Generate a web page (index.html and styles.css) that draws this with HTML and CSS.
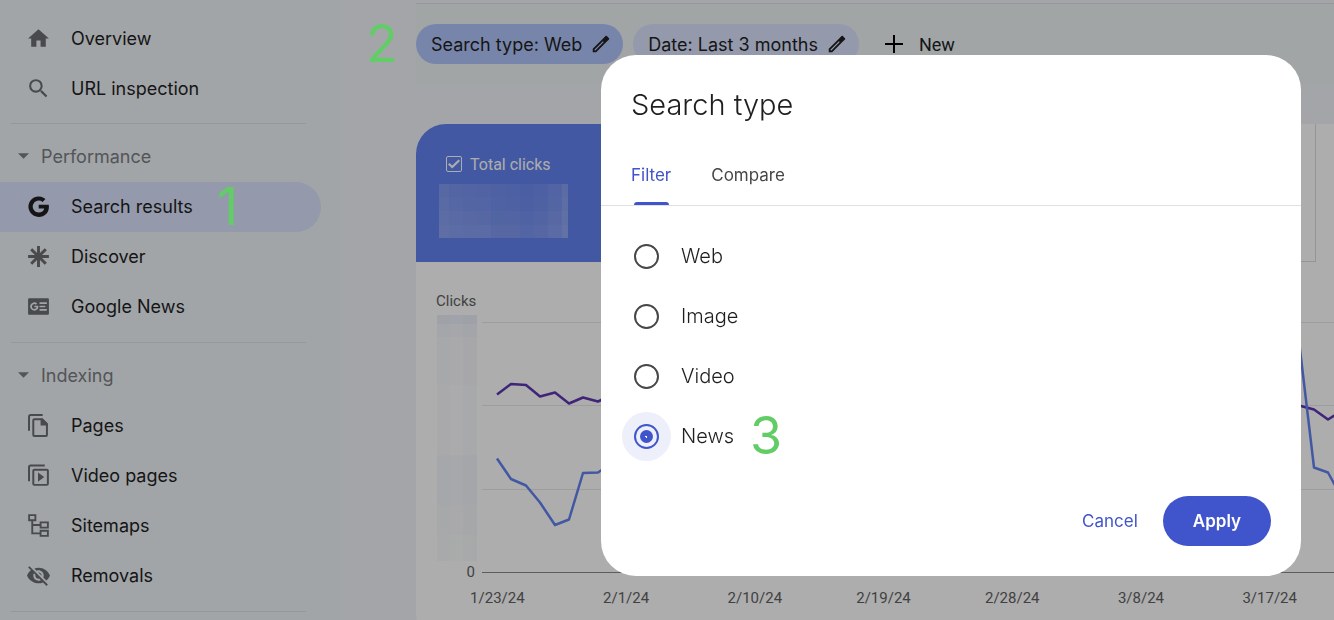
FILE: index.html
```html
<!DOCTYPE html>
<html lang="en">
<head>
<meta charset="utf-8">
<title>Search Console - Performance</title>
<link rel="stylesheet" href="styles.css">
</head>
<body>
<div class="app">
  <nav class="sidebar">
    <a class="nav-item" href="#"><svg class="icon" viewBox="0 0 24 24"><path d="M10 20v-6h4v6h5v-8h3L12 3 2 12h3v8z"/></svg>Overview</a>
    <a class="nav-item" href="#"><svg class="icon" viewBox="0 0 24 24"><path d="M15.5 14h-.79l-.28-.27A6.47 6.47 0 0 0 16 9.5 6.5 6.5 0 1 0 9.5 16c1.61 0 3.09-.59 4.23-1.57l.27.28v.79l5 4.99L20.49 19l-4.99-5zm-6 0C7.01 14 5 11.99 5 9.5S7.01 5 9.5 5 14 7.01 14 9.5 11.99 14 9.5 14z"/></svg>URL inspection</a>
    <hr class="divider">
    <button class="nav-heading" type="button"><svg class="caret" viewBox="0 0 12 6"><path d="M0 0h12L6 6z"/></svg>Performance</button>
    <a class="nav-item active" href="#"><svg class="icon" viewBox="0 0 24 24"><path d="M12.2 10.2v3.7h5.3c-.5 2.3-2.5 3.8-5.3 3.8a5.7 5.7 0 1 1 3.7-10l2.8-2.8A9.8 9.8 0 1 0 12.2 22c5.8 0 9.8-4 9.8-9.8 0-.7-.1-1.400-.2-2z"/></svg>Search results</a>
    <a class="nav-item" href="#"><svg class="icon" viewBox="0 0 24 24"><path fill="none" stroke="currentColor" stroke-width="2.8" d="M12 2v20M2 12h20M5 5l14 14M19 5L5 19"/></svg>Discover</a>
    <a class="nav-item" href="#"><svg class="icon" viewBox="0 0 24 24"><path fill-rule="evenodd" d="M3 4h18a1 1 0 0 1 1 1v14a1 1 0 0 1-1 1H3a1 1 0 0 1-1-1V5a1 1 0 0 1 1-1zm10 4v1.600h7V8zm0 3.200v1.600h5.500v-1.600zm0 3.200V16h7v-1.600zM8 11.200v1.600h2.100c-.2.900-1 1.500-2.100 1.500a2.300 2.300 0 1 1 1.500-4l1.200-1.200A4 4 0 1 0 8 16c2.300 0 3.900-1.600 3.900-4 0-.3 0-.5-.1-.8z"/></svg>Google News</a>
    <hr class="divider">
    <button class="nav-heading" type="button"><svg class="caret" viewBox="0 0 12 6"><path d="M0 0h12L6 6z"/></svg>Indexing</button>
    <a class="nav-item" href="#"><svg class="icon" viewBox="0 0 24 24"><path fill="none" stroke="currentColor" stroke-width="1.900" d="M2.900 17V3.500Q2.900 1.900 4.500 1.900H16M8 5.900h7.500L20.100 10.500V21a1 1 0 0 1-1 1H8a1 1 0 0 1-1-1V6.900a1 1 0 0 1 1-1z"/><path d="M14 5.500h2l4.800 5V12H14z"/></svg>Pages</a>
    <a class="nav-item" href="#"><svg class="icon" viewBox="0 0 24 24"><path fill="none" stroke="currentColor" stroke-width="1.900" d="M2.900 17.500V4Q2.900 2.400 4.500 2.400H18M8 6.400h12a1 1 0 0 1 1 1v12.600a1 1 0 0 1-1 1H8a1 1 0 0 1-1-1V7.400a1 1 0 0 1 1-1z"/><path d="M11.500 9v9l6-4.500z"/></svg>Video pages</a>
    <a class="nav-item" href="#"><svg class="icon" viewBox="0 0 24 24"><path fill="none" stroke="currentColor" stroke-width="1.800" d="M3 2h6v5H3zM14 9h7v5h-7zM14 17h7v5h-7zM6 7v12.500h8M6 11.500h8"/></svg>Sitemaps</a>
    <a class="nav-item" href="#"><svg class="icon" viewBox="0 0 24 24"><path d="M12 7c2.760 0 5 2.240 5 5 0 .65-.13 1.260-.36 1.830l2.920 2.920c1.510-1.260 2.700-2.890 3.430-4.750-1.730-4.390-6-7.500-11-7.500-1.400 0-2.740.25-3.980.7l2.160 2.160C10.740 7.130 11.350 7 12 7zM2 4.270l2.280 2.280.46.46C3.080 8.300 1.780 10.020 1 12c1.730 4.390 6 7.500 11 7.500 1.550 0 3.030-.3 4.380-.84l.42.42L19.730 22 21 20.730 3.270 3 2 4.270zM7.530 9.800l1.550 1.550c-.05.21-.08.43-.08.65 0 1.660 1.340 3 3 3 .22 0 .44-.03.65-.08l1.550 1.550c-.67.33-1.410.53-2.200.53-2.760 0-5-2.240-5-5 0-.79.2-1.530.53-2.200zm4.310-.78l3.150 3.150.02-.16c0-1.660-1.340-3-3-3l-.17.010z"/></svg>Removals</a>
    <hr class="divider">
  </nav>

  <main class="main">
    <div class="filter-bar">
      <button class="chip selected" type="button">Search type: Web<svg class="icon" viewBox="0 0 24 24"><path d="M3 17.250V21h3.750L17.810 9.940l-3.750-3.750zM5.920 19H5v-.92l9.060-9.060.92.920zM20.710 5.630l-2.340-2.340a1 1 0 0 0-1.410 0l-2.900 2.900 3.750 3.750 2.900-2.900a1 1 0 0 0 0-1.410z"/></svg></button>
      <button class="chip" type="button">Date: Last 3 months<svg class="icon" viewBox="0 0 24 24"><path d="M3 17.250V21h3.750L17.810 9.940l-3.750-3.750zM5.920 19H5v-.92l9.060-9.060.92.920zM20.710 5.630l-2.340-2.340a1 1 0 0 0-1.410 0l-2.900 2.900 3.750 3.750 2.900-2.900a1 1 0 0 0 0-1.410z"/></svg></button>
      <button class="add-filter" type="button"><svg class="plus" viewBox="0 0 18 18"><path d="M8 0h2v8h8v2h-8v8H8v-8H0V8h8z"/></svg>New</button>
    </div>

    <section class="card">
      <div class="metrics">
        <div class="metric clicks">
          <label class="metric-label"><input class="check" type="checkbox" checked>Total clicks</label>
          <svg class="mosaic" viewBox="0 0 129 54" fill="#fff">
            <path opacity=".16" d="M0 0h10v54H0z"/><path opacity=".12" d="M10 0h14v54H10z"/><path opacity=".11" d="M24 0h14v54H24z"/><path opacity=".1" d="M38 0h14v54H38z"/><path opacity=".06" d="M52 0h14v54H52z"/><path opacity=".05" d="M66 0h15v54H66z"/><path opacity=".03" d="M81 0h14v54H81z"/><path opacity=".05" d="M95 0h14v54H95z"/><path opacity=".11" d="M109 0h14v54h-14z"/><path opacity=".2" d="M123 0h6v54h-6z"/>
            <path opacity=".05" d="M0 0h129v13H0z"/><path opacity=".07" d="M0 13h129v14H0z"/><path opacity=".1" d="M0 27h129v14H0z"/><path opacity=".14" d="M0 41h129v13H0z"/>
          </svg>
        </div>
        <div class="metric rest"></div>
      </div>
      <div class="chart">
        <div class="axis-title">Clicks</div>
        <div class="plot-row">
          <div class="y-axis"><div class="y-mosaic"></div><span>0</span></div>
          <svg class="plot" viewBox="0 0 852 258" preserveAspectRatio="none">
            <path class="grid" d="M0 7.500h852M0 90.500h852M0 174.500h852"/>
            <path class="base" d="M0 257.500h852"/>
            <path class="line impressions" d="M15 79.500L29 69L44 70L58 81.500L73 77.500L87 88.500L101 82.500L116 86.500L130 80L400 85L817 90.500L832 94.500L846 104.500L861 95"/>
            <path class="line total" d="M15 143.500L29 164L44 170.500L58 187.500L73 210L87 204.500L101 158L116 157.500L130 148L400 120L803 20L817 26L832 152.500L846 157.500L861 185"/>
          </svg>
        </div>
        <div class="dates"><span>1/23/24</span><span>2/1/24</span><span>2/10/24</span><span>2/19/24</span><span>2/28/24</span><span>3/8/24</span><span>3/17/24</span></div>
      </div>
    </section>
  </main>
</div>

<div class="backdrop">
  <span class="step step-one">1</span>
  <span class="step step-two">2</span>
  <form class="dialog" role="dialog" aria-labelledby="dialog-title">
    <h1 class="dialog-title" id="dialog-title">Search type</h1>
    <div class="tabs" role="tablist">
      <button class="tab current" type="button" role="tab" aria-selected="true">Filter</button>
      <button class="tab" type="button" role="tab" aria-selected="false">Compare</button>
    </div>
    <div class="options">
      <label class="option"><input class="radio" type="radio" name="type">Web</label>
      <label class="option"><input class="radio" type="radio" name="type">Image</label>
      <label class="option"><input class="radio" type="radio" name="type">Video</label>
      <div class="option-row"><label class="option"><input class="radio" type="radio" name="type" checked>News</label><span class="step">3</span></div>
    </div>
    <div class="actions">
      <button class="cancel" type="button">Cancel</button>
      <button class="apply" type="button">Apply</button>
    </div>
  </form>
</div>
</body>
</html>
```
FILE: styles.css
```css
* { box-sizing: border-box; }

body {
  margin: 0;
  height: 100vh;
  overflow: hidden;
  background: #f2f3f9;
  color: #1f1f1f;
  font-family: Inter, Roboto, sans-serif;
  font-size: 18px;
}

button {
  border: 0;
  padding: 0;
  background: none;
  color: inherit;
  font: inherit;
  cursor: pointer;
}

.app { display: flex; height: 100vh; overflow: hidden; }

.sidebar {
  flex: none;
  width: 340px;
  height: 100vh;
  overflow: hidden;
  padding-top: 13px;
  background: #eef3f7;
}

.nav-item {
  display: flex;
  align-items: center;
  gap: 20px;
  height: 50px;
  margin-right: 19px;
  padding-left: 26px;
  border-radius: 0 25px 25px 0;
  color: #1f1f1f;
  text-decoration: none;
}

.nav-heading ~ .nav-item { padding-bottom: 2px; }

.icon { flex: none; width: 25px; height: 25px; fill: currentColor; }
.nav-item .icon { color: #6a6d70; }
.nav-item.active { background: #dae2fd; }
.nav-item.active .icon { color: #1f1f1f; }

.divider {
  height: 1px;
  margin: 10px 34px 8px 11px;
  border: 0;
  background: #dcdfe3;
}

.nav-heading {
  display: flex;
  align-items: center;
  gap: 12px;
  width: 100%;
  height: 50px;
  padding: 0 0 2px 18px;
  color: #7b7e82;
}

.caret { width: 11px; height: 6px; fill: currentColor; }

.main { flex: 1; min-width: 0; padding: 3px 0 0 76px; }

.filter-bar {
  display: flex;
  gap: 10px;
  height: 81px;
  padding-top: 20px;
  border-top: 1px solid #dcdfe2;
  background: #eef3f5;
  white-space: nowrap;
}

.chip {
  display: flex;
  align-items: center;
  gap: 8px;
  height: 40px;
  padding: 0 11px 0 15px;
  border-radius: 20px;
  background: #dae2fd;
}

.chip.selected { background: #b1c5fb; }
.chip .icon { width: 22px; height: 22px; }

.add-filter {
  display: flex;
  align-items: center;
  gap: 16px;
  height: 40px;
  margin-left: 16px;
  font-family: Roboto, sans-serif;
}

.plus { width: 18px; height: 18px; }

.card {
  height: 520px;
  margin-top: 40px;
  border-radius: 30px 0 0 30px;
  overflow: hidden;
  background: #fff;
  font-family: Roboto, sans-serif;
}

.metrics { display: flex; height: 138px; margin-right: 18px; }
.metric { flex: 1; }
.rest { flex: 3; border: solid #dadce0; border-width: 0 1px 1px 0; }
.clicks { padding: 30px 23px; background: #6282f0; color: #fff; font-size: 16px; }
.metric-label { display: flex; align-items: center; gap: 8px; height: 20px; padding-left: 7px; }

.check {
  appearance: none;
  display: grid;
  place-items: center;
  width: 16px;
  height: 16px;
  margin: 0;
  border: 1px solid #fff;
  border-radius: 2px;
}

.check::before {
  content: "";
  width: 12px;
  height: 10px;
  background: #fff;
  clip-path: polygon(0 55%, 12% 40%, 35% 65%, 88% 5%, 100% 20%, 35% 95%);
}

.mosaic { display: block; width: 129px; height: 54px; margin-top: 10px; }

.chart { color: #616161; font-size: 15px; }
.axis-title { height: 53px; padding: 29px 0 0 20px; line-height: 20px; }
.plot-row { display: flex; height: 258px; }
.y-axis { position: relative; flex: none; width: 66px; padding-left: 21px; }
.y-axis span { position: absolute; right: 7px; bottom: -8px; line-height: 18px; }

.y-mosaic {
  width: 40px;
  height: 246px;
  background:
    linear-gradient(90deg, #9fb4e00a 13px, #9fb4e004 13px 26px, #9fb4e00e 26px),
    linear-gradient(#eff1fb 9px, #f6f7fc 9px 22px, #fbfbfd 22px 70px, #fdfdfd 70px 140px, #f8f9fc 140px 190px, #fafbfc 190px 220px, #fcfdfc 220px);
}

.plot { flex: 1; min-width: 0; height: 258px; }
.plot path { fill: none; vector-effect: non-scaling-stroke; }
.plot .grid { stroke: #e8e8e8; }
.plot .base { stroke: #8a8a8a; }
.plot .line { stroke-width: 2.500px; stroke-linejoin: round; }
.plot .impressions { stroke: #5e35b1; }
.plot .total { stroke: #6282f0; }

.dates { display: flex; padding: 15px 0 0 17px; line-height: 20px; }
.dates span { flex: 1; text-align: center; }

.backdrop {
  position: fixed;
  inset: 0;
  display: flex;
  justify-content: flex-end;
  align-items: flex-start;
  padding: 55px 33px;
  background: rgba(0, 0, 0, 0.32);
}

.dialog {
  width: 700px;
  max-width: 100%;
  border-radius: 35px;
  overflow: hidden;
  background: #fff;
  font-size: 17px;
}

.dialog-title {
  margin: 0;
  padding: 30px 30px 0;
  font-size: 29px;
  font-weight: 300;
  line-height: 40px;
}

.tabs {
  display: flex;
  gap: 40px;
  height: 81px;
  padding: 20px 30px 0;
  border-bottom: 1px solid #e0e0e3;
}

.tab { position: relative; height: 60px; color: #474747; }
.tab.current { color: #4054cc; }

.current::after {
  content: "";
  position: absolute;
  inset: auto 2px 0 3px;
  height: 3px;
  border-radius: 3px 3px 0 0;
  background: currentColor;
}

.options { padding: 20px 33px 0; }
.option-row { display: flex; align-items: center; gap: 16px; }
.option { display: flex; align-items: center; gap: 22px; height: 60px; font-size: 20px; font-weight: 300; }

.radio {
  appearance: none;
  display: grid;
  place-items: center;
  width: 25px;
  height: 25px;
  margin: 0;
  border: 2px solid #474747;
  border-radius: 50%;
}

.radio:checked { border-color: #4054cc; background: #edf0fb; box-shadow: 0 0 0 12px #edf0fb; }

.radio:checked::before {
  content: "";
  width: 13px;
  height: 13px;
  border-radius: 50%;
  background: radial-gradient(circle, #fff 1px, #4054cc 1px);
}

.actions { display: flex; justify-content: flex-end; gap: 25px; padding: 30px; }
.cancel { color: #4054cc; }
.apply { height: 50px; padding: 0 30px; border-radius: 25px; background: #4054cc; color: #fff; font-weight: 600; }

.step { color: #62cd66; font: 400 52px/52px Inter, sans-serif; }
.step-one { position: absolute; left: 217px; top: 181px; }
.step-two { position: absolute; left: 366px; top: 18px; }
```
